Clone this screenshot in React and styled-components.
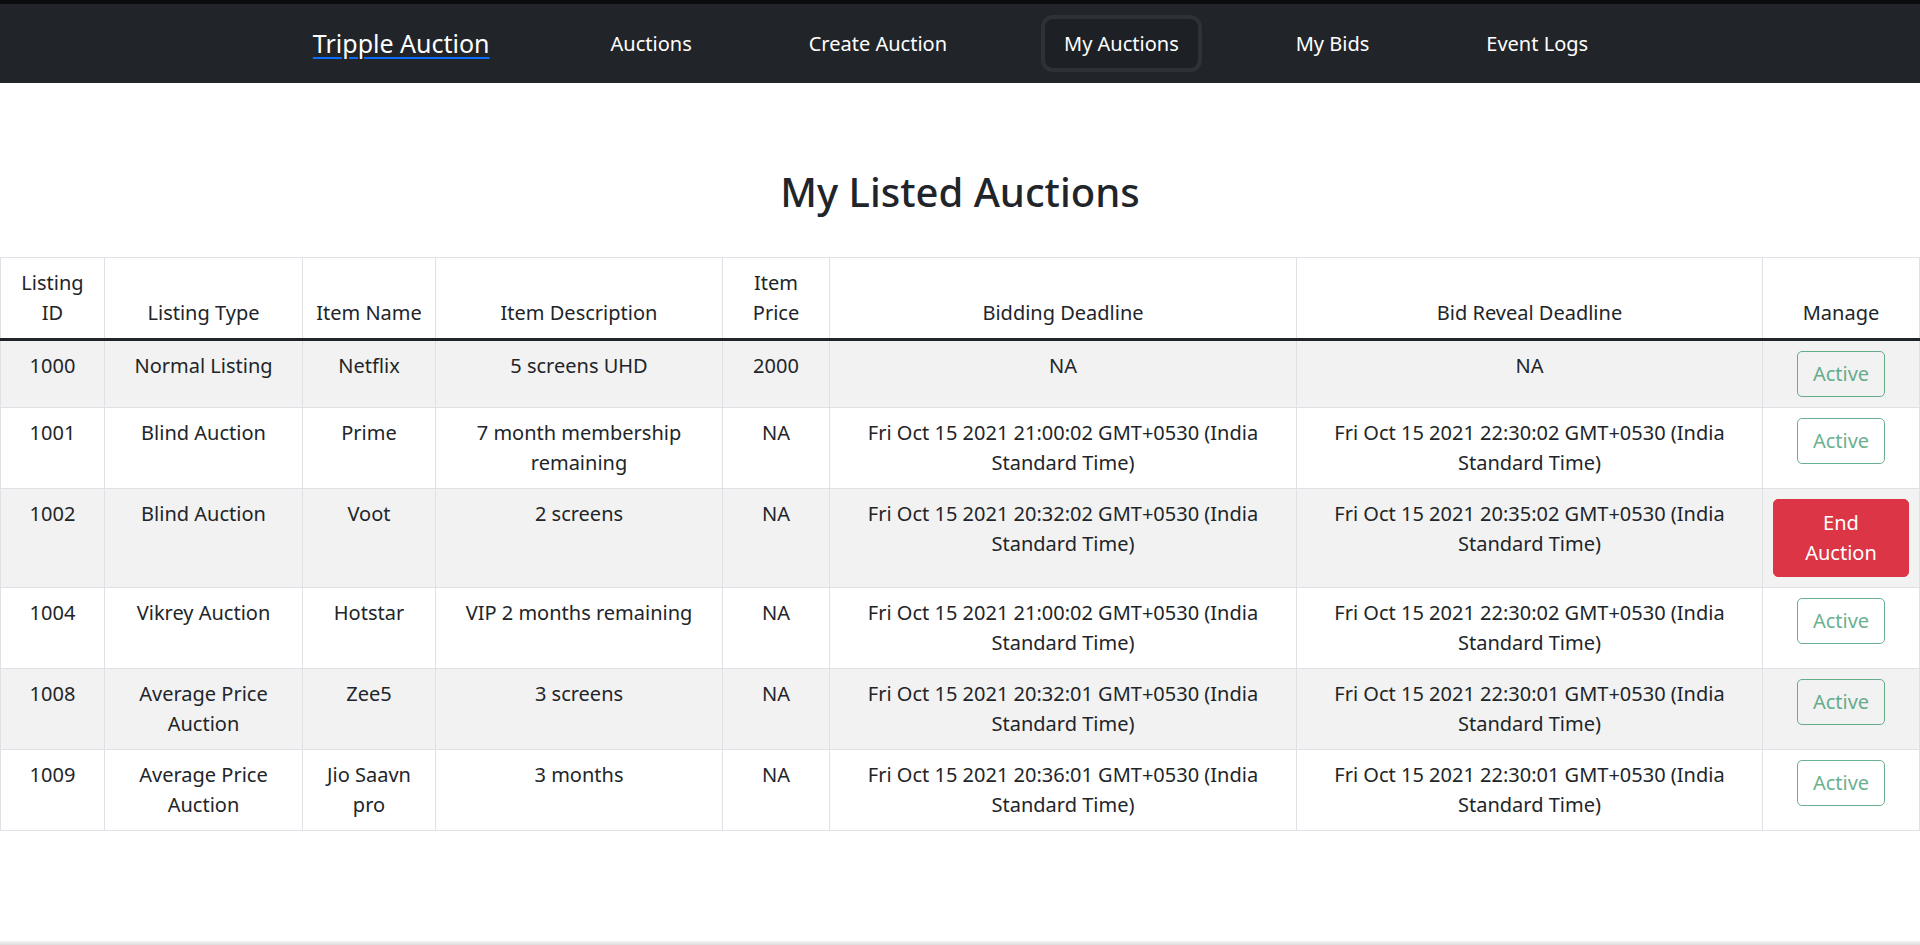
import React from 'react';
import styled, { createGlobalStyle } from 'styled-components';

const GlobalStyle = createGlobalStyle`
  html, body {
    margin: 0;
    padding: 0;
    background: #fff;
  }
  body {
    font-family: "Noto Sans", "Open Sans", sans-serif;
    font-size: 20px;
    line-height: 1.5;
    color: #212529;
  }
  * {
    box-sizing: border-box;
  }
`

const Page = styled.div`
  min-height: 100vh;
  display: flex;
  flex-direction: column;
`

const TopStrip = styled.div`
  height: 4px;
  background: #0b0c0e;
`

const Navbar = styled.nav`
  height: 79px;
  background: #212529;
  display: flex;
  align-items: center;
  justify-content: center;
`

const Brand = styled.a`
  font-size: 25px;
  color: #fff;
  text-decoration: underline;
  text-decoration-color: #0d6efd;
  text-decoration-thickness: 2px;
  text-underline-offset: 4px;
  margin-right: 102px;
  cursor: pointer;
`

const NavLinks = styled.div`
  display: flex;
  align-items: center;
  gap: 79px;
`

const NavLink = styled.a`
  color: #fff;
  font-size: 20px;
  line-height: 30px;
  padding: 10px 19px 9px;
  border-radius: 8px;
  cursor: pointer;
  background: ${p => (p.$active ? '#1d2024' : 'transparent')};
  box-shadow: ${p => (p.$active ? '0 0 0 4px #2e3237' : 'none')};
`

const Main = styled.main`
  flex: 1;
  padding-top: 85px;
`

const Title = styled.h2`
  margin: 0 0 41px;
  text-align: center;
  font-size: 40px;
  font-weight: 500;
  line-height: 1.2;
`

const Table = styled.table`
  width: 100%;
  table-layout: fixed;
  border-collapse: collapse;
  border: 1px solid #dee2e6;
`

const HeadCell = styled.th`
  font-weight: 400;
  padding: 10px;
  vertical-align: bottom;
  text-align: center;
  border: 1px solid #dee2e6;
  border-bottom: 3px solid #212529;
`

const Row = styled.tr`
  background: ${p => (p.$striped ? '#f2f2f2' : '#fff')};
`

const Cell = styled.td`
  padding: 10px;
  vertical-align: top;
  text-align: center;
  border: 1px solid #dee2e6;
`

const Button = styled.button`
  font-family: inherit;
  font-size: 20px;
  line-height: 1.5;
  padding: ${p => (p.$danger ? '8px 15px' : '7px 15px')};
  border-radius: 5px;
  border: 1px solid ${p => (p.$danger ? '#dc3545' : '#198754')};
  background: ${p => (p.$danger ? '#dc3545' : 'transparent')};
  color: ${p => (p.$danger ? '#fff' : '#198754')};
  opacity: ${p => (p.$danger ? 1 : 0.65)};
  cursor: ${p => (p.$danger ? 'pointer' : 'default')};
`

const BottomEdge = styled.div`
  height: 4px;
  background: linear-gradient(#f4f4f4, #dcdcdc);
`

const columns = [
  { label: 'Listing ID', width: 104 },
  { label: 'Listing Type', width: 198 },
  { label: 'Item Name', width: 133 },
  { label: 'Item Description', width: 287 },
  { label: 'Item Price', width: 107 },
  { label: 'Bidding Deadline', width: 467 },
  { label: 'Bid Reveal Deadline', width: 466 },
  { label: 'Manage', width: 157 },
];

const date = (t) => `Fri Oct 15 2021 ${t} GMT+0530 (India Standard Time)`;

const listings = [
  { id: 1000, type: 'Normal Listing', name: 'Netflix', desc: '5 screens UHD', price: '2000', bid: 'NA', reveal: 'NA', canEnd: false },
  { id: 1001, type: 'Blind Auction', name: 'Prime', desc: '7 month membership remaining', price: 'NA', bid: date('21:00:02'), reveal: date('22:30:02'), canEnd: false },
  { id: 1002, type: 'Blind Auction', name: 'Voot', desc: '2 screens', price: 'NA', bid: date('20:32:02'), reveal: date('20:35:02'), canEnd: true },
  { id: 1004, type: 'Vikrey Auction', name: 'Hotstar', desc: 'VIP 2 months remaining', price: 'NA', bid: date('21:00:02'), reveal: date('22:30:02'), canEnd: false },
  { id: 1008, type: 'Average Price Auction', name: 'Zee5', desc: '3 screens', price: 'NA', bid: date('20:32:01'), reveal: date('22:30:01'), canEnd: false },
  { id: 1009, type: 'Average Price Auction', name: 'Jio Saavn pro', desc: '3 months', price: 'NA', bid: date('20:36:01'), reveal: date('22:30:01'), canEnd: false },
];

const navItems = ['Auctions', 'Create Auction', 'My Auctions', 'My Bids', 'Event Logs'];

export default function App() {
  return (
    <Page>
      <GlobalStyle />
      <TopStrip />
      <Navbar>
        <Brand>Tripple Auction</Brand>
        <NavLinks>
          {navItems.map(item => (
            <NavLink key={item} $active={item === 'My Auctions'}>{item}</NavLink>
          ))}
        </NavLinks>
      </Navbar>
      <Main>
        <Title>My Listed Auctions</Title>
        <Table>
          <colgroup>
            {columns.map(c => <col key={c.label} style={{ width: c.width }} />)}
          </colgroup>
          <thead>
            <tr>
              {columns.map(c => <HeadCell key={c.label}>{c.label}</HeadCell>)}
            </tr>
          </thead>
          <tbody>
            {listings.map((l, i) => (
              <Row key={l.id} $striped={i % 2 === 0}>
                <Cell>{l.id}</Cell>
                <Cell>{l.type}</Cell>
                <Cell>{l.name}</Cell>
                <Cell>{l.desc}</Cell>
                <Cell>{l.price}</Cell>
                <Cell>{l.bid}</Cell>
                <Cell>{l.reveal}</Cell>
                <Cell>
                  {l.canEnd
                    ? <Button $danger>End Auction</Button>
                    : <Button disabled>Active</Button>}
                </Cell>
              </Row>
            ))}
          </tbody>
        </Table>
      </Main>
      <BottomEdge />
    </Page>
  );
}
